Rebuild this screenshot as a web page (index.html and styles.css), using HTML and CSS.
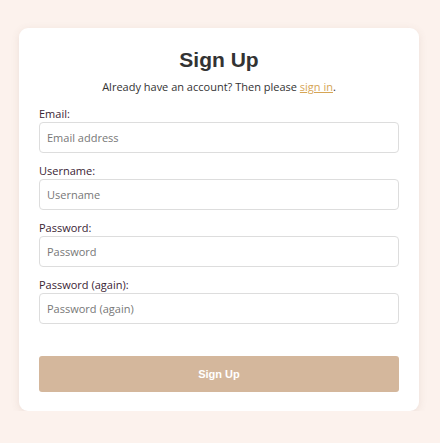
FILE: index.html
```html
<!DOCTYPE html>
<html lang="en">
<head>
<meta charset="utf-8">
<title>Sign Up</title>
<link rel="stylesheet" href="styles.css">
</head>
<body>
<div class="page">
  <form class="card">
    <h1 class="title">Sign Up</h1>
    <p class="subtitle">Already have an account? Then please <a class="link" href="#">sign in</a>.</p>
    <div class="fields">
      <div class="field">
        <label class="label" for="email">Email:</label>
        <input class="input" id="email" type="email" placeholder="Email address">
      </div>
      <div class="field">
        <label class="label" for="username">Username:</label>
        <input class="input" id="username" type="text" placeholder="Username">
      </div>
      <div class="field">
        <label class="label" for="password1">Password:</label>
        <input class="input" id="password1" type="password" placeholder="Password">
      </div>
      <div class="field">
        <label class="label" for="password2">Password (again):</label>
        <input class="input" id="password2" type="password" placeholder="Password (again)">
      </div>
    </div>
    <button class="button" type="button">Sign Up</button>
  </form>
</div>
</body>
</html>
```

FILE: styles.css
```css
* { box-sizing: border-box; }
html, body {
  margin: 0;
  padding: 0;
  background: #fcf2ed;
}
.page {
  padding: 28px 21px 0 19px;
}
.card {
  width: 400px;
  background: #ffffff;
  border-radius: 9px;
  box-shadow: 0 2px 8px rgba(120, 90, 70, 0.12);
  padding: 20px 20px 19px 20px;
  display: flex;
  flex-direction: column;
}
.title {
  margin: 0;
  font-family: "Liberation Sans", Arial, sans-serif;
  font-weight: bold;
  font-size: 21px;
  line-height: 24px;
  color: #333333;
  text-align: center;
}
.subtitle {
  margin: 7px 0 0 0;
  font-family: "Open Sans", sans-serif;
  font-size: 11px;
  line-height: 16px;
  color: #333333;
  text-align: center;
}
.link {
  color: #d6a555;
  text-decoration: underline;
}
.fields {
  margin-top: 11px;
  display: flex;
  flex-direction: column;
  gap: 10px;
}
.field {
  display: flex;
  flex-direction: column;
}
.label {
  font-family: "Open Sans", sans-serif;
  font-size: 11px;
  line-height: 16px;
  color: #3a2434;
}
.input {
  height: 31px;
  width: 100%;
  margin: 0;
  border: 1px solid #dddddd;
  border-radius: 4px;
  padding: 0 7px;
  font-family: "Open Sans", sans-serif;
  font-size: 11px;
  color: #333;
  background: #fff;
  outline: none;
}
.input::placeholder {
  color: #777777;
}
.button {
  margin-top: 32px;
  height: 36px;
  width: 100%;
  border: none;
  border-radius: 3px;
  background: #d4b79c;
  color: #ffffff;
  font-family: "Liberation Sans", Arial, sans-serif;
  font-weight: bold;
  font-size: 11px;
}
```
